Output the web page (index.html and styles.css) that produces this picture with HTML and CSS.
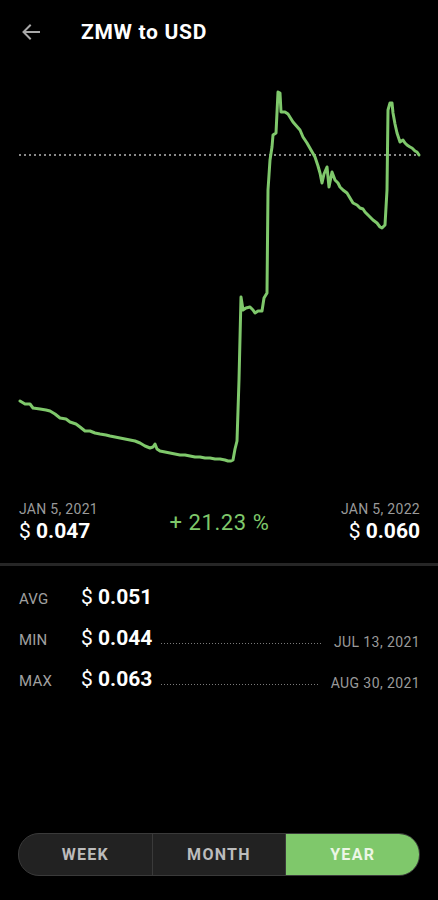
FILE: index.html
```html
<!DOCTYPE html>
<html lang="en">
<head>
  <meta charset="UTF-8" />
  <meta name="viewport" content="width=device-width, initial-scale=1.0" />
  <title>ZMW to USD</title>
  <link rel="stylesheet" href="styles.css">
</head>
<body>
  <div class="app">
    <div class="header">
      <svg class="back" width="18" height="16" viewBox="0 0 18 16">
        <path d="M17 8H2M8 1.5L1.5 8L8 14.5" fill="none" stroke="#a8a8a8" stroke-width="2" stroke-linecap="square" />
      </svg>
      <h1>ZMW to USD</h1>
    </div>

    <!-- chart drawn in page coordinates -->
    <svg class="chart" width="438" height="428" viewBox="0 64 438 428">
      <line x1="19" y1="155" x2="420" y2="155" stroke="#8a8a8a" stroke-width="2" stroke-dasharray="2 3" />
      <polyline fill="none" stroke="#7fc86b" stroke-width="3" stroke-linejoin="round" stroke-linecap="round"
        points="20,401 25,404 30,404 33,408 40,409 46,410 50,411 55,414 60,418 66,419 70,422 76,424 80,427 85,431 90,431 95,433 100,434 106,435 110,436 115,437 120,438 125,439 130,440 135,441 140,443 145,446 150,448 153,447 155,444 157,449 160,451 165,452 170,453 175,454 180,455 185,455 190,456 195,457 200,457 205,458 210,458 215,459 220,459 225,460 228,461 231,461 233,460 235,449 237,441 239,380 241,297 243,310 246,308 250,307 253,310 255,313 258,311 262,311 264,298 267,293 268,190 270,160 272,147 273,135 276,133 278,92 280,93 281,112 285,112 288,114 293,122 300,130 303,137 307,143 311,150 315,157 318,166 320,173 322,183 324,174 327,167 329,187 332,172 335,180 338,183 340,187 343,190 347,193 350,198 353,203 357,205 360,208 363,209 365,212 368,215 370,217 373,220 377,223 380,227 382,228 385,225 387,190 388,110 390,103 392,103 393,113 395,124 397,133 400,142 403,140 405,143 407,145 410,147 412,148 415,151 417,152 419,155" />
    </svg>

    <div class="summary">
      <div class="point">
        <div class="date">JAN 5, 2021</div>
        <div class="value"><span class="cur">$</span> 0.047</div>
      </div>
      <div class="change">+ 21.23 %</div>
      <div class="point right">
        <div class="date">JAN 5, 2022</div>
        <div class="value"><span class="cur">$</span> 0.060</div>
      </div>
    </div>

    <div class="divider"></div>

    <div class="stats">
      <div class="stat">
        <span class="label">AVG</span>
        <span class="value"><span class="cur">$</span> 0.051</span>
      </div>
      <div class="stat">
        <span class="label">MIN</span>
        <span class="value"><span class="cur">$</span> 0.044</span>
        <span class="dots"></span>
        <span class="when">JUL 13, 2021</span>
      </div>
      <div class="stat">
        <span class="label">MAX</span>
        <span class="value"><span class="cur">$</span> 0.063</span>
        <span class="dots"></span>
        <span class="when">AUG 30, 2021</span>
      </div>
    </div>

    <div class="range">
      <button type="button">WEEK</button>
      <button type="button">MONTH</button>
      <button type="button" class="active">YEAR</button>
    </div>
  </div>
</body>
</html>
```

FILE: styles.css
```css
body {
  margin: 0;
  background-color: #000;
  font-family: Roboto, "Liberation Sans", sans-serif;
  color: #fff;
}
.app {
  display: flex;
  flex-direction: column;
  min-height: 900px;
}
.header {
  display: flex;
  align-items: center;
  height: 64px;
  padding-left: 22px;
}
.back {
  display: block;
}
.header h1 {
  margin: 0 0 0 41px;
  font-size: 21px;
  font-weight: 700;
  letter-spacing: 0.7px;
}
.chart {
  display: block;
}
.summary {
  display: flex;
  align-items: center;
  justify-content: space-between;
  padding: 9px 18px 0 19px;
}
.point .date {
  font-size: 14px;
  color: #9a9a9a;
  letter-spacing: 0.3px;
}
.point .value {
  margin-top: 2px;
  font-size: 21px;
  font-weight: 700;
}
.point.right {
  text-align: right;
}
.cur {
  font-weight: 400;
}
.change {
  margin-top: 1px;
  font-size: 22px;
  color: #7fc86b;
  letter-spacing: 0.6px;
}
.divider {
  height: 3px;
  margin-top: 20px;
  background-color: #262626;
}
.stats {
  display: flex;
  flex-direction: column;
  gap: 16px;
  padding: 19px 18px 0 19px;
}
.stat {
  display: flex;
  align-items: baseline;
  height: 25px;
}
.stat .label {
  width: 62px;
  font-size: 15px;
  color: #a0a0a0;
  letter-spacing: 0.2px;
}
.stat .value {
  font-size: 21px;
  font-weight: 700;
}
.dots {
  flex: 1;
  height: 1px;
  margin: 0 13px 0 9px;
  background-image: repeating-linear-gradient(to right, #7a7a7a 0 1px, transparent 1px 3px);
  position: relative;
  top: -1px;
}
.when {
  font-size: 14px;
  color: #9a9a9a;
  letter-spacing: 0.4px;
  position: relative;
  top: 2px;
}
.range {
  display: flex;
  margin: auto 18px 24px 18px;
  height: 41px;
  border: 1px solid #3a3a3a;
  border-radius: 21px;
  background-color: #222;
  overflow: hidden;
}
.range button {
  flex: 1;
  border: none;
  border-left: 1px solid #3a3a3a;
  background: none;
  font-family: Roboto, "Liberation Sans", sans-serif;
  font-size: 16px;
  font-weight: 700;
  letter-spacing: 1.3px;
  color: #bcbcbc;
}
.range button:first-child {
  border-left: none;
}
.range .active {
  background-color: #7fc86b;
  color: #ecf6e6;
}
```
